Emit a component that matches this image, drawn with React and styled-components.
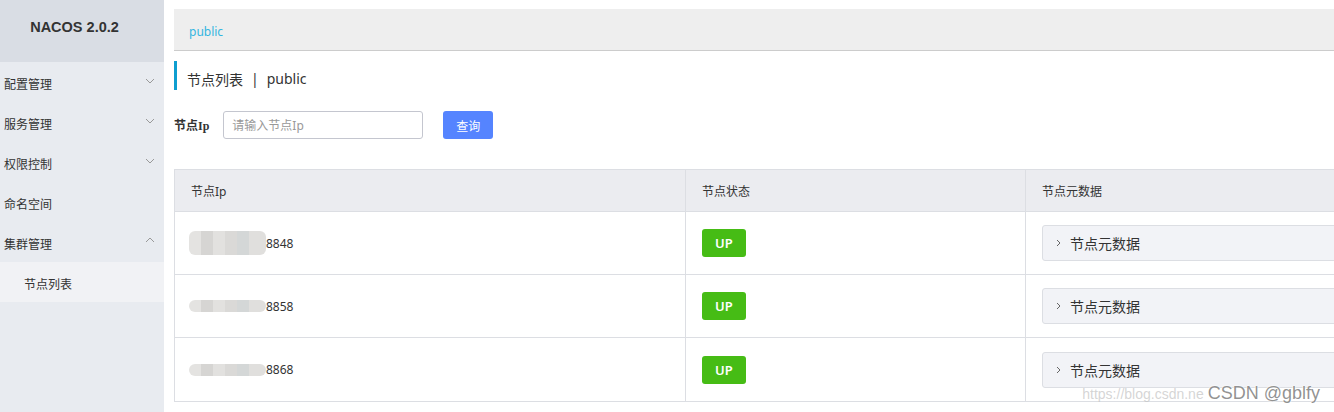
import React from 'react';
import styled, { createGlobalStyle } from 'styled-components';

const GlobalStyle = createGlobalStyle`
  html, body {
    margin: 0;
    padding: 0;
    background: #fff;
    overflow: hidden;
  }
  body {
    font-family: "Noto Sans", "Noto Sans CJK SC", sans-serif;
    color: #333;
  }
`;

const Page = styled.div`
  display: flex;
  height: 412px;
  width: 1334px;
  overflow: hidden;
  position: relative;
`;

const Sidebar = styled.aside`
  width: 164px;
  flex: none;
  background: #e8ebf0;
  display: flex;
  flex-direction: column;
`;

const Logo = styled.div`
  height: 62px;
  background: #d9dde4;
  display: flex;
  align-items: center;
  justify-content: center;
  padding: 0 15px 8px 0;
  box-sizing: border-box;
  font-family: "Liberation Sans", sans-serif;
  font-weight: bold;
  font-size: 14.5px;
  color: #333;
`;

const Menu = styled.ul`
  list-style: none;
  margin: 0;
  padding: 0;
`;

const MenuItem = styled.li`
  height: 40px;
  box-sizing: border-box;
  display: flex;
  align-items: center;
  justify-content: space-between;
  padding: ${p => (p.sub ? '4px 14px 0 24px' : '4px 9px 0 4px')};
  background: ${p => (p.sub ? '#f1f2f5' : 'transparent')};
  font-size: 12px;
  color: #333;
`;

const Chevron = ({ up }) => (
  <svg width="10" height="6" viewBox="0 0 10 6" style={{ marginTop: up ? -8 : -6 }}>
    <polyline
      points={up ? '1,5 5,1 9,5' : '1,1 5,5 9,1'}
      fill="none"
      stroke="#999"
      strokeWidth="1"
    />
  </svg>
);

const Main = styled.main`
  flex: none;
  width: 1240px;
  padding: 9px 0 0 10px;
  display: flex;
  flex-direction: column;
`;

const Breadcrumb = styled.div`
  height: 42px;
  background: #eeeeee;
  border-bottom: 1px solid #cccccc;
  display: flex;
  align-items: center;
  padding: 3px 0 0 15px;
  box-sizing: border-box;
  font-size: 12px;
  color: #33b5e0;
`;

const PageTitle = styled.h2`
  margin: 10px 0 0 0;
  height: 29px;
  border-left: 3px solid #0e9ed0;
  padding: 6px 0 0 10px;
  box-sizing: border-box;
  display: flex;
  align-items: center;
  font-size: 14px;
  font-weight: normal;
  color: #333;
  gap: 8px;
`;

const SearchForm = styled.form`
  margin-top: 21px;
  display: flex;
  align-items: center;
  height: 28px;
`;

const Label = styled.label`
  font-family: "Liberation Serif", "Noto Sans CJK SC", serif;
  font-weight: bold;
  font-size: 12px;
  color: #333;
  margin-right: 14px;
`;

const Input = styled.input`
  width: 200px;
  height: 28px;
  box-sizing: border-box;
  border: 1px solid #c4c6cf;
  border-radius: 3px;
  padding: 0 8px;
  font-family: "Noto Sans", "Noto Sans CJK SC", sans-serif;
  font-size: 12px;
  color: #333;
  outline: none;
  &::placeholder {
    color: #999;
  }
`;

const Button = styled.button`
  margin-left: 20px;
  width: 50px;
  height: 28px;
  border: none;
  border-radius: 3px;
  background: #5584ff;
  color: #fff;
  font-family: "Noto Sans CJK SC", sans-serif;
  font-size: 12px;
  padding: 0;
`;

const Table = styled.div`
  margin-top: 31px;
  width: 1191px;
  border: 1px solid #dcdee3;
  border-right: none;
  display: grid;
  grid-template-columns: 511px 340px 340px;
`;

const HeadCell = styled.div`
  height: 42px;
  box-sizing: border-box;
  background: #ebecf0;
  border-right: 1px solid #dcdee3;
  border-bottom: 1px solid #dcdee3;
  display: flex;
  align-items: center;
  padding: 0 16px;
  font-size: 12px;
  color: #333;
`;

const Cell = styled.div`
  height: 63px;
  box-sizing: border-box;
  border-right: 1px solid #dcdee3;
  border-bottom: ${p => (p.last ? 'none' : '1px solid #dcdee3')};
  display: flex;
  align-items: center;
  padding: 0 ${p => (p.first ? 14 : 16)}px;
  font-size: 12px;
  color: #333;
`;

const Blur = styled.span`
  display: inline-block;
  width: 77px;
  height: ${p => (p.tall ? 24 : 12)}px;
  border-radius: 6px;
  background: linear-gradient(
    90deg,
    #e4e3e1 0 12px,
    #d6d5d3 12px 24px,
    #e2e1df 24px 36px,
    #dad9d7 36px 48px,
    #d4d7d7 48px 60px,
    #e0dfdd 60px 77px
  );
  filter: blur(0.5px);
`;

const Tag = styled.span`
  display: inline-flex;
  align-items: center;
  height: 28px;
  padding: 0 13px;
  border-radius: 3px;
  background: #46bc15;
  color: #fff;
  font-family: "Noto Sans", sans-serif;
  font-weight: 600;
  font-size: 13px;
`;

const Collapse = styled.div`
  width: 308px;
  flex: none;
  height: 36px;
  box-sizing: border-box;
  border: 1px solid #dcdee3;
  border-radius: 3px;
  background: #f2f3f7;
  display: flex;
  align-items: center;
  padding-left: 13px;
  gap: 9px;
  font-size: 14px;
  color: #333;
`;

const Arrow = () => (
  <svg width="5" height="8" viewBox="0 0 5 8">
    <polyline points="1,1 4,4 1,7" fill="none" stroke="#666" strokeWidth="1" />
  </svg>
);

const Watermark = styled.div`
  position: absolute;
  right: 14px;
  bottom: 8px;
  display: flex;
  align-items: baseline;
  gap: 4px;
  pointer-events: none;
`;

const WatermarkUrl = styled.span`
  font-family: "Liberation Sans", sans-serif;
  font-size: 14px;
  color: rgba(195, 195, 195, 0.7);
  white-space: nowrap;
`;

const WatermarkName = styled.span`
  font-family: "Liberation Sans", "Noto Sans CJK SC", sans-serif;
  font-size: 18px;
  color: rgba(110, 110, 110, 0.75);
  text-shadow: 0 0 2px #fff, 0 0 2px #fff;
`;

const nodes = [
  { port: '8848', tall: true },
  { port: '8858' },
  { port: '8868' }
];

export default function App() {
  return (
    <>
      <GlobalStyle />
      <Page>
        <Sidebar>
          <Logo>NACOS 2.0.2</Logo>
          <Menu>
            <MenuItem>配置管理<Chevron /></MenuItem>
            <MenuItem>服务管理<Chevron /></MenuItem>
            <MenuItem>权限控制<Chevron /></MenuItem>
            <MenuItem>命名空间</MenuItem>
            <MenuItem>集群管理<Chevron up /></MenuItem>
            <MenuItem sub>节点列表</MenuItem>
          </Menu>
        </Sidebar>
        <Main>
          <Breadcrumb>public</Breadcrumb>
          <PageTitle>
            <span>节点列表</span>
            <span>|</span>
            <span>public</span>
          </PageTitle>
          <SearchForm onSubmit={e => e.preventDefault()}>
            <Label>节点Ip</Label>
            <Input placeholder="请输入节点Ip" />
            <Button type="submit">查询</Button>
          </SearchForm>
          <Table style={{ marginTop: 30 }}>
            <HeadCell>节点Ip</HeadCell>
            <HeadCell>节点状态</HeadCell>
            <HeadCell>节点元数据</HeadCell>
            {nodes.map((n, i) => {
              const last = i === nodes.length - 1;
              return (
                <React.Fragment key={n.port}>
                  <Cell first last={last}>
                    <Blur tall={n.tall} />
                    {n.port}
                  </Cell>
                  <Cell last={last}>
                    <Tag>UP</Tag>
                  </Cell>
                  <Cell last={last}>
                    <Collapse>
                      <Arrow />
                      节点元数据
                    </Collapse>
                  </Cell>
                </React.Fragment>
              );
            })}
          </Table>
        </Main>
        <Watermark>
          <WatermarkUrl>https://blog.csdn.ne</WatermarkUrl>
          <WatermarkName>CSDN @gblfy</WatermarkName>
        </Watermark>
      </Page>
    </>
  );
}
